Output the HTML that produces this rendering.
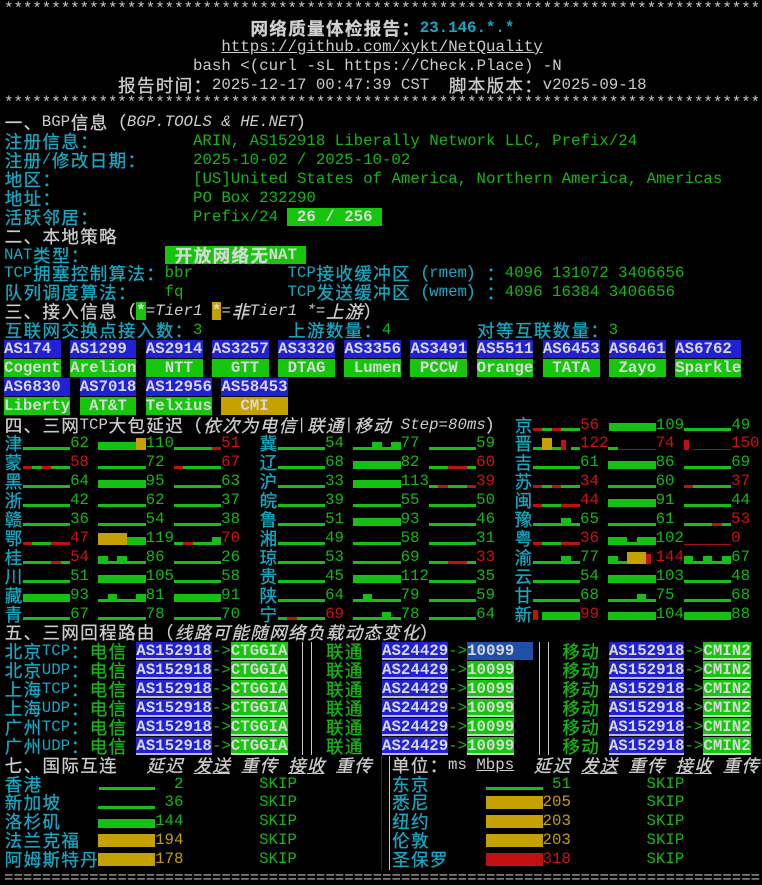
<!DOCTYPE html>
<html><head><meta charset="utf-8">
<style>
html,body{margin:0;padding:0;background:#000;}
#scr{position:relative;width:762px;height:885px;overflow:hidden;background:#000;color:#cccccc;font-family:"Liberation Mono","Noto Sans CJK SC",monospace;font-size:15.75px;}
.L{height:18.9px;line-height:18.9px;white-space:pre;padding-left:4px;}
.k{display:inline-block;vertical-align:top;position:relative;top:1px;height:18.9px;width:18.9px;text-align:center;font-family:"Noto Sans CJK SC","WenQuanYi Zen Hei",sans-serif;font-size:17.5px;line-height:18.9px;-webkit-text-stroke:0.3px currentColor;}
u .k{text-decoration:underline;}
.bc{display:inline-block;position:relative;width:9.45px;height:18.9px;vertical-align:top;}
s{text-decoration:none;}
.c{color:#14a9c4}
.g{color:#14b814}
.r{color:#d01010}
.y{color:#c4a000}
.w{color:#d0d0d0}
.b{font-weight:bold}
.it{font-style:italic}
.A{background:#2020d4;color:#d8d8d8;font-weight:bold}
.N{background:#16c60c;color:#d8d8d8;font-weight:bold}
.Y{background:#c4a000;color:#d8d8d8;font-weight:bold}
.A2{background:#2020d4;color:#d8d8d8;font-weight:bold;box-shadow:inset 0 -2px #b8b8e0}
.N2{background:#16c60c;color:#d8d8d8;font-weight:bold;box-shadow:inset 0 -2px #b8e0b8}
.S{background:#1f4fa8;color:#d8d8d8;font-weight:bold}
.vl{position:absolute;width:1px;background:#c8c8c8;}
u{text-decoration:underline;}
</style></head><body>
<div id="scr">
<div class="L">********************************************************************************</div>
<div class="L">                          <span class="b w">网络质量体检报告：</span><span class="b c">23.146.*.*</span></div>
<div class="L">                       <u>https://github.com/xykt/NetQuality</u></div>
<div class="L">                    bash &lt;(curl -sL https://Check.Place) -N</div>
<div class="L">            报告时间：2025-12-17 00:47:39 CST  脚本版本：v2025-09-18</div>
<div class="L">********************************************************************************</div>
<div class="L">一、BGP信息（<span class="it">BGP.TOOLS &amp; HE.NET</span>）</div>
<div class="L"><span class="c">注册信息：</span>          <span class="g">ARIN, AS152918 Liberally Network LLC, Prefix/24</span></div>
<div class="L"><span class="c">注册/修改日期：</span>     <span class="g">2025-10-02 / 2025-10-02</span></div>
<div class="L"><span class="c">地区：</span>              <span class="g">[US]United States of America, Northern America, Americas</span></div>
<div class="L"><span class="c">地址：</span>              <span class="g">PO Box 232290</span></div>
<div class="L"><span class="c">活跃邻居：</span>          <span class="g">Prefix/24 </span><span class="N"> 26 / 256 </span></div>
<div class="L">二、本地策略</div>
<div class="L"><span class="c">NAT类型：</span>        <span class="N"> 开放网络无NAT </span></div>
<div class="L"><span class="c">TCP拥塞控制算法：</span><span class="g">bbr</span>          <span class="c">TCP接收缓冲区（rmem）：</span><span class="g">4096 131072 3406656</span></div>
<div class="L"><span class="c">队列调度算法：</span>   <span class="g">fq</span>           <span class="c">TCP发送缓冲区（wmem）：</span><span class="g">4096 16384 3406656</span></div>
<div class="L">三、接入信息（<span class="N">*</span><span class="it">=Tier1 </span><span class="Y">*</span><span class="it">=非Tier1 *=上游</span>）</div>
<div class="L"><span class="c">互联网交换点接入数：</span><span class="g">3</span>         <span class="c">上游数量：</span><span class="g">4</span>         <span class="c">对等互联数量：</span><span class="g">3</span></div>
<div class="L"><span class="A">AS174 </span> <span class="A">AS1299 </span> <span class="A">AS2914</span> <span class="A">AS3257</span> <span class="A">AS3320</span> <span class="A">AS3356</span> <span class="A">AS3491</span> <span class="A">AS5511</span> <span class="A">AS6453</span> <span class="A">AS6461</span> <span class="A">AS6762 </span></div>
<div class="L"><span class="N">Cogent</span> <span class="N">Arelion</span> <span class="N">  NTT </span> <span class="N">  GTT </span> <span class="N"> DTAG </span> <span class="N"> Lumen</span> <span class="N"> PCCW </span> <span class="N">Orange</span> <span class="N"> TATA </span> <span class="N"> Zayo </span> <span class="N">Sparkle</span></div>
<div class="L"><span class="A">AS6830 </span> <span class="A">AS7018</span> <span class="A">AS12956</span> <span class="A">AS58453</span></div>
<div class="L"><span class="N">Liberty</span> <span class="N"> AT&amp;T </span> <span class="N">Telxius</span> <span class="Y">  CMI  </span></div>
<div class="L">四、三网TCP大包延迟（<span class="it">依次为电信|联通|移动 Step=80ms</span>） <span class="c">京</span><s>r_r__</s><span class="r">56 </span><s>hhhhh</s><span class="g">109</span><s>_____</s><span class="g">49 </span></div>
<div class="L"><span class="c">津</span><s>_____</s><span class="g">62 </span><s>hhhhY</s><span class="g">110</span><s>____r</s><span class="r">51 </span> <span class="c">冀</span><s>_____</s><span class="g">54 </span><s>__h_h</s><span class="g">77 </span><s>_____</s><span class="g">59 </span> <span class="c">晋</span><s>_Y_R_</s><span class="r">122</span><s>_....</s><span class="r">74 </span><s>R....</s><span class="r">150</span></div>
<div class="L"><span class="c">蒙</span><s>r_r__</s><span class="r">58 </span><s>_____</s><span class="g">72 </span><s>r____</s><span class="r">67 </span> <span class="c">辽</span><s>_____</s><span class="g">68 </span><s>hhhhh</s><span class="g">82 </span><s>__rr_</s><span class="r">60 </span> <span class="c">吉</span><s>_____</s><span class="g">61 </span><s>hhhhh</s><span class="g">86 </span><s>_____</s><span class="g">69 </span></div>
<div class="L"><span class="c">黑</span><s>_____</s><span class="g">64 </span><s>hhhhh</s><span class="g">95 </span><s>_____</s><span class="g">63 </span> <span class="c">沪</span><s>_____</s><span class="g">33 </span><s>hhhhh</s><span class="g">113</span><s>_r__r</s><span class="r">39 </span> <span class="c">苏</span><s>r_r__</s><span class="r">34 </span><s>_____</s><span class="g">60 </span><s>r____</s><span class="r">37 </span></div>
<div class="L"><span class="c">浙</span><s>_____</s><span class="g">42 </span><s>_____</s><span class="g">62 </span><s>_____</s><span class="g">37 </span> <span class="c">皖</span><s>_____</s><span class="g">39 </span><s>_____</s><span class="g">55 </span><s>_____</s><span class="g">50 </span> <span class="c">闽</span><s>r__rr</s><span class="r">44 </span><s>hhhhh</s><span class="g">91 </span><s>_____</s><span class="g">44 </span></div>
<div class="L"><span class="c">赣</span><s>_____</s><span class="g">36 </span><s>_____</s><span class="g">54 </span><s>_____</s><span class="g">38 </span> <span class="c">鲁</span><s>_____</s><span class="g">51 </span><s>hhhhh</s><span class="g">93 </span><s>_____</s><span class="g">46 </span> <span class="c">豫</span><s>___h_</s><span class="g">65 </span><s>_____</s><span class="g">61 </span><s>___r_</s><span class="r">53 </span></div>
<div class="L"><span class="c">鄂</span><s>r__rr</s><span class="r">47 </span><s>YYYhh</s><span class="g">119</span><s>_r__h</s><span class="r">70 </span> <span class="c">湘</span><s>_____</s><span class="g">49 </span><s>_____</s><span class="g">58 </span><s>_____</s><span class="g">31 </span> <span class="c">粤</span><s>r__rr</s><span class="r">36 </span><s>hh_hh</s><span class="g">102</span><s>.....</s><span class="r">0  </span></div>
<div class="L"><span class="c">桂</span><s>___r_</s><span class="r">54 </span><s>h_h__</s><span class="g">86 </span><s>_____</s><span class="g">26 </span> <span class="c">琼</span><s>_____</s><span class="g">53 </span><s>_____</s><span class="g">69 </span><s>__rr_</s><span class="r">33 </span> <span class="c">渝</span><s>___h_</s><span class="g">77 </span><s>h_YYR</s><span class="r">144</span><s>h_h_h</s><span class="g">67 </span></div>
<div class="L"><span class="c">川</span><s>_____</s><span class="g">51 </span><s>hhhhh</s><span class="g">105</span><s>_____</s><span class="g">58 </span> <span class="c">贵</span><s>_____</s><span class="g">45 </span><s>hhhhh</s><span class="g">112</span><s>_____</s><span class="g">35 </span> <span class="c">云</span><s>_____</s><span class="g">54 </span><s>hhhhh</s><span class="g">103</span><s>_____</s><span class="g">48 </span></div>
<div class="L"><span class="c">藏</span><s>hhhhh</s><span class="g">93 </span><s>_h__h</s><span class="g">81 </span><s>hhhhh</s><span class="g">91 </span> <span class="c">陕</span><s>_____</s><span class="g">64 </span><s>_h___</s><span class="g">79 </span><s>_____</s><span class="g">59 </span> <span class="c">甘</span><s>_____</s><span class="g">68 </span><s>___h_</s><span class="g">75 </span><s>_____</s><span class="g">68 </span></div>
<div class="L"><span class="c">青</span><s>_____</s><span class="g">67 </span><s>_____</s><span class="g">78 </span><s>_____</s><span class="g">70 </span> <span class="c">宁</span><s>_r___</s><span class="r">69 </span><s>___h_</s><span class="g">78 </span><s>_____</s><span class="g">64 </span> <span class="c">新</span><s>Rhhhh</s><span class="r">99 </span><s>hhhhh</s><span class="g">104</span><s>hhhhh</s><span class="g">88 </span></div>
<div class="L">五、三网回程路由（<span class="it">线路可能随网络负载动态变化</span>）</div>
<div class="L"><span class="c">北京TCP：</span><span class="g">电信</span> <span class="A2">AS152918</span><span class="g">-&gt;</span><span class="N2">CTGGIA</span>    <span class="g">联通</span>  <span class="A2">AS24429</span><span class="g">-&gt;</span><span class="S">10099  </span>   <span class="g">移动</span> <span class="A2">AS152918</span><span class="g">-&gt;</span><span class="N2">CMIN2</span></div>
<div class="L"><span class="c">北京UDP：</span><span class="g">电信</span> <span class="A2">AS152918</span><span class="g">-&gt;</span><span class="N2">CTGGIA</span>    <span class="g">联通</span>  <span class="A2">AS24429</span><span class="g">-&gt;</span><span class="N2">10099</span>     <span class="g">移动</span> <span class="A2">AS152918</span><span class="g">-&gt;</span><span class="N2">CMIN2</span></div>
<div class="L"><span class="c">上海TCP：</span><span class="g">电信</span> <span class="A2">AS152918</span><span class="g">-&gt;</span><span class="N2">CTGGIA</span>    <span class="g">联通</span>  <span class="A2">AS24429</span><span class="g">-&gt;</span><span class="N2">10099</span>     <span class="g">移动</span> <span class="A2">AS152918</span><span class="g">-&gt;</span><span class="N2">CMIN2</span></div>
<div class="L"><span class="c">上海UDP：</span><span class="g">电信</span> <span class="A2">AS152918</span><span class="g">-&gt;</span><span class="N2">CTGGIA</span>    <span class="g">联通</span>  <span class="A2">AS24429</span><span class="g">-&gt;</span><span class="N2">10099</span>     <span class="g">移动</span> <span class="A2">AS152918</span><span class="g">-&gt;</span><span class="N2">CMIN2</span></div>
<div class="L"><span class="c">广州TCP：</span><span class="g">电信</span> <span class="A2">AS152918</span><span class="g">-&gt;</span><span class="N2">CTGGIA</span>    <span class="g">联通</span>  <span class="A2">AS24429</span><span class="g">-&gt;</span><span class="N2">10099</span>     <span class="g">移动</span> <span class="A2">AS152918</span><span class="g">-&gt;</span><span class="N2">CMIN2</span></div>
<div class="L"><span class="c">广州UDP：</span><span class="g">电信</span> <span class="A2">AS152918</span><span class="g">-&gt;</span><span class="N2">CTGGIA</span>    <span class="g">联通</span>  <span class="A2">AS24429</span><span class="g">-&gt;</span><span class="N2">10099</span>     <span class="g">移动</span> <span class="A2">AS152918</span><span class="g">-&gt;</span><span class="N2">CMIN2</span></div>
<div class="L">七、国际互连   <span class="it">延迟 <u>发送</u> 重传 <u>接收</u> 重传</span>  单位：ms <u>Mbps</u>  <span class="it">延迟 <u>发送</u> 重传 <u>接收</u> 重传</span></div>
<div class="L"><span class="c">香港</span>      <s>______</s><span class="g">  2</span>        <span class="g">SKIP</span>          <span class="c">东京</span>      <s>______</s><span class="g"> 51</span>        <span class="g">SKIP</span></div>
<div class="L"><span class="c">新加坡</span>    <s>______</s><span class="g"> 36</span>        <span class="g">SKIP</span>          <span class="c">悉尼</span>      <s>yyyyyy</s><span class="y">205</span>        <span class="g">SKIP</span></div>
<div class="L"><span class="c">洛杉矶</span>    <s>HHHHHH</s><span class="g">144</span>        <span class="g">SKIP</span>          <span class="c">纽约</span>      <s>yyyyyy</s><span class="y">203</span>        <span class="g">SKIP</span></div>
<div class="L"><span class="c">法兰克福</span>  <s>yyyyyy</s><span class="y">194</span>        <span class="g">SKIP</span>          <span class="c">伦敦</span>      <s>yyyyyy</s><span class="y">203</span>        <span class="g">SKIP</span></div>
<div class="L"><span class="c">阿姆斯特丹</span><s>yyyyyy</s><span class="y">178</span>        <span class="g">SKIP</span>          <span class="c">圣保罗</span>    <s>XXXXXX</s><span class="r">318</span>        <span class="g">SKIP</span></div>
<div class="L" style="color:#bbbbbb">================================================================================</div>

<div class="vl" style="left:302px;top:642px;height:113px"></div>
<div class="vl" style="left:311px;top:642px;height:113px"></div>
<div class="vl" style="left:539px;top:642px;height:113px"></div>
<div class="vl" style="left:548px;top:642px;height:113px"></div>
<div class="vl" style="left:381px;top:756px;height:114px;background:#900"></div>
<div class="vl" style="left:389px;top:756px;height:114px"></div>
</div>
<script>
(function(){
var W={
'_':{c:'#14c014',h:3},
'h':{c:'#14c014',h:8},
'H':{c:'#14c014',h:9},
'Y':{c:'#c4a000',h:12},
'y':{c:'#c4a000',h:13},
'r':{c:'#c01010',h:3},
'R':{c:'#c01010',h:10,w:5},
'.':{c:'#a01010',h:1},
'X':{c:'#c01010',h:13}
};
var ss=document.querySelectorAll('#scr s');
for(var i=0;i<ss.length;i++){
 var s=ss[i],code=s.textContent;s.textContent='';
 for(var j=0;j<code.length;j++){
  var cell=document.createElement('span');cell.className='bc';
  var m=W[code[j]];
  if(m){var d=document.createElement('span');
   d.style.cssText='position:absolute;left:0;bottom:3px;width:'+(m.w||9.45)+'px;height:'+m.h+'px;background:'+m.c;
   cell.appendChild(d);}
  s.appendChild(cell);
 }
}
var re=/[\u2e80-\uff60]/;
function wrap(n){
 var kids=Array.prototype.slice.call(n.childNodes);
 for(var i=0;i<kids.length;i++){
  var c=kids[i];
  if(c.nodeType===3){
   var t=c.textContent;
   if(re.test(t)){
    var f=document.createDocumentFragment(),buf='';
    for(var k=0;k<t.length;k++){
     var ch=t[k];
     if(re.test(ch)){
      if(buf){f.appendChild(document.createTextNode(buf));buf='';}
      var sp=document.createElement('span');sp.className='k';sp.textContent=ch;f.appendChild(sp);
     } else buf+=ch;
    }
    if(buf)f.appendChild(document.createTextNode(buf));
    n.replaceChild(f,c);
   }
  } else if(c.nodeType===1 && c.tagName!=='S'){wrap(c);}
 }
}
wrap(document.getElementById('scr'));
})();
</script>
</body></html>
